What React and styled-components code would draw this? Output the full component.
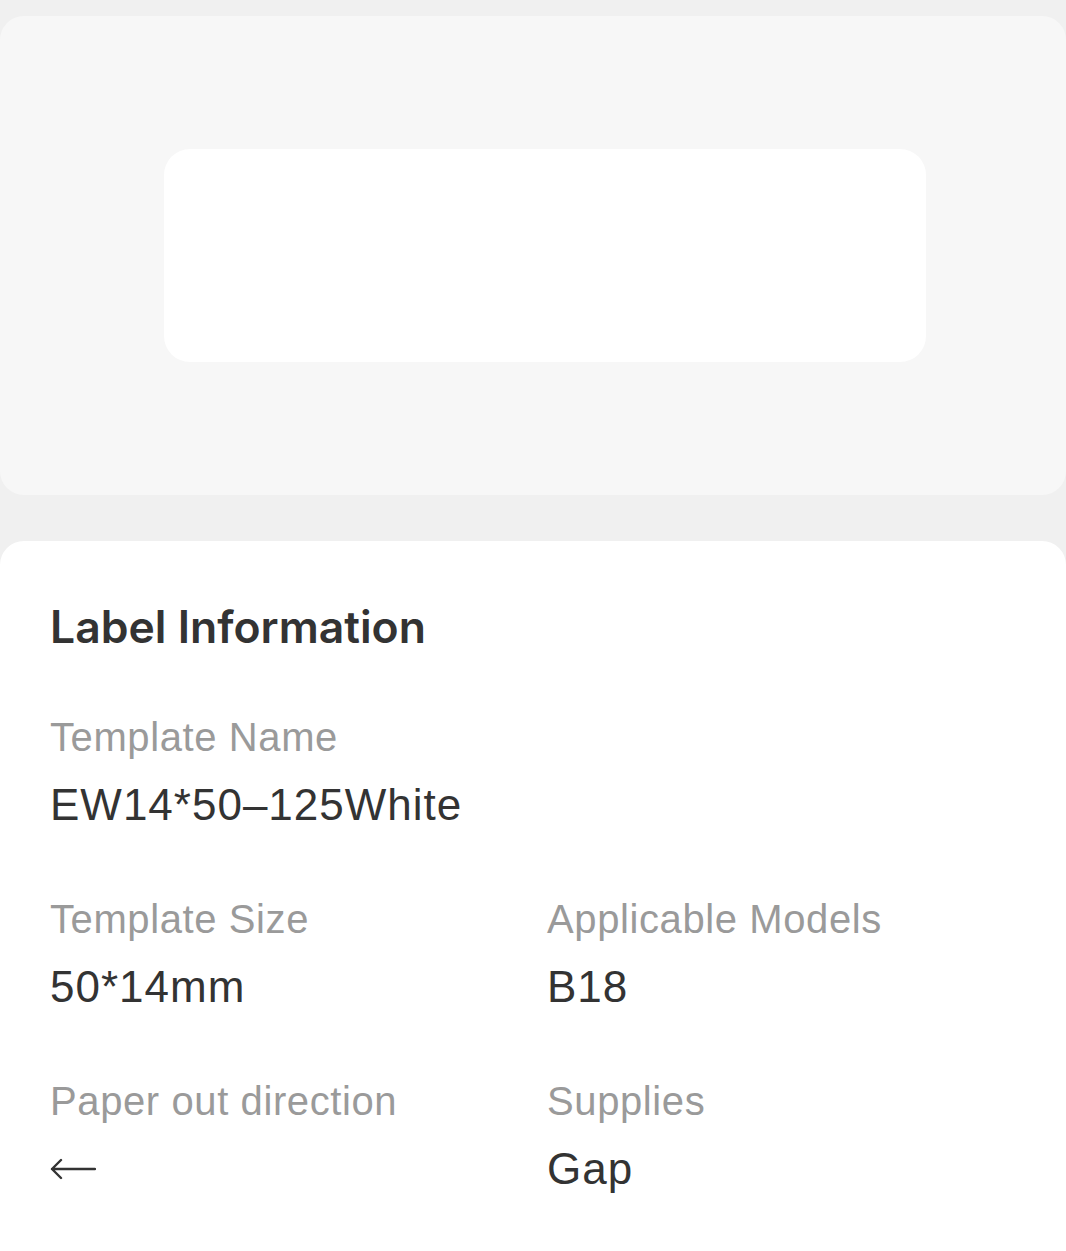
import React from "react";
import styled, { createGlobalStyle } from "styled-components";

const GlobalStyle = createGlobalStyle`
  html, body {
    margin: 0;
    padding: 0;
    background: #f0f0f0;
  }
  body {
    font-family: "Liberation Sans", Arial, sans-serif;
  }
`;

const Page = styled.div`
  padding-top: 16px;
  min-height: 1251px;
  box-sizing: border-box;
  display: flex;
  flex-direction: column;
`;

const PreviewCard = styled.div`
  height: 479px;
  background: #f7f7f7;
  border-radius: 24px;
  display: flex;
  align-items: center;
  padding-left: 164px;
`;

const LabelSheet = styled.div`
  width: 762px;
  height: 213px;
  background: #ffffff;
  border-radius: 26px;
`;

const InfoCard = styled.div`
  margin-top: 46px;
  flex: 1;
  background: #ffffff;
  border-radius: 24px 24px 0 0;
  padding: 56px 50px 40px;
`;

const Title = styled.h2`
  margin: 0 0 52px;
  font-family: Inter, "Liberation Sans", Arial, sans-serif;
  font-size: 44.5px;
  line-height: 60px;
  font-weight: 600;
  color: #333333;
`;

const Grid = styled.div`
  display: grid;
  grid-template-columns: 497px 1fr;
  row-gap: 56px;
`;

const Field = styled.div`
  grid-column: ${(p) => (p.full ? "1 / -1" : "auto")};
  display: flex;
  flex-direction: column;
  gap: 10px;
`;

const FieldLabel = styled.div`
  font-size: 40px;
  line-height: 56px;
  letter-spacing: 0.6px;
  color: #9a9a9a;
`;

const FieldValue = styled.div`
  display: flex;
  align-items: center;
  height: 60px;
  font-size: 44px;
  line-height: 60px;
  letter-spacing: 1px;
  color: #333333;
`;

const ArrowIcon = () => (
  <svg width="46" height="24" viewBox="0 0 46 24" fill="none">
    <path
      d="M45 12H2M11 3L2 12l9 9"
      stroke="#333333"
      strokeWidth="2.4"
      strokeLinecap="round"
      strokeLinejoin="round"
    />
  </svg>
);

const fields = [
  { label: "Template Name", value: "EW14*50–125White", full: true },
  { label: "Template Size", value: "50*14mm" },
  { label: "Applicable Models", value: "B18" },
  { label: "Paper out direction", value: <ArrowIcon /> },
  { label: "Supplies", value: "Gap" },
];

export default function App() {
  return (
    <Page>
      <GlobalStyle />
      <PreviewCard>
        <LabelSheet />
      </PreviewCard>
      <InfoCard>
        <Title>Label Information</Title>
        <Grid>
          {fields.map((f) => (
            <Field key={f.label} full={f.full}>
              <FieldLabel>{f.label}</FieldLabel>
              <FieldValue>{f.value}</FieldValue>
            </Field>
          ))}
        </Grid>
      </InfoCard>
    </Page>
  );
}
